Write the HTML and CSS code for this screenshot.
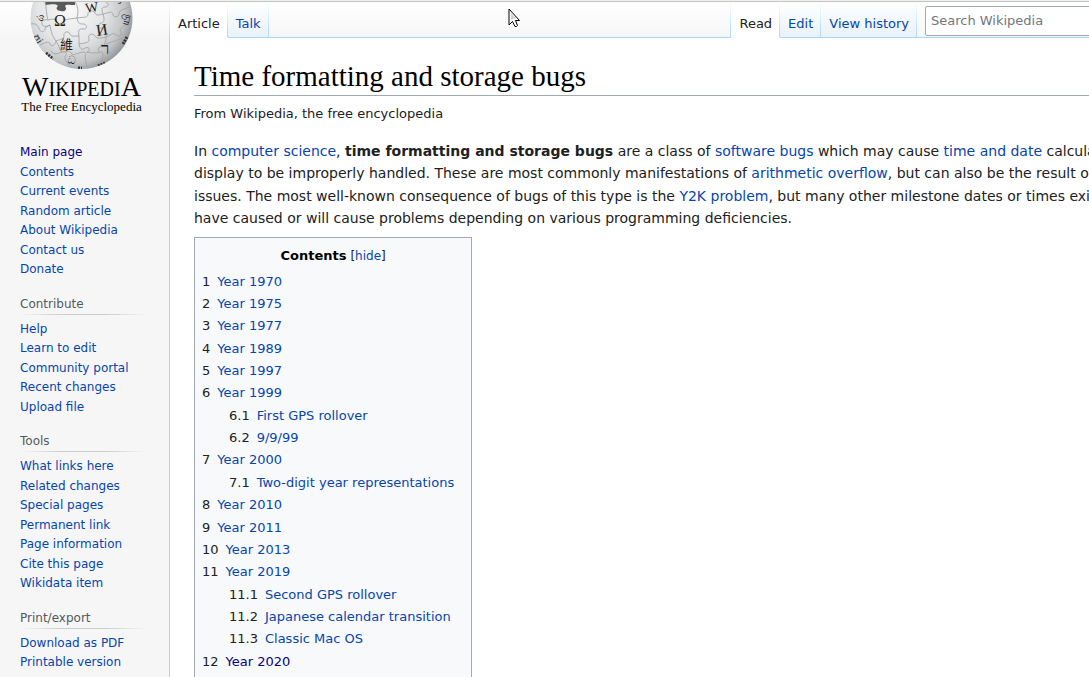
FILE: index.html
```html
<!DOCTYPE html>
<html lang="en">
<head>
<meta charset="utf-8">
<title>Time formatting and storage bugs - Wikipedia</title>
<link rel="stylesheet" href="styles.css">
</head>
<body>
<div class="page">
  <aside class="sidebar">
    <a class="logo" href="#" aria-label="Wikipedia main page">
      <svg class="globe" viewBox="0 0 104 68" width="104" height="68" aria-hidden="true">
        <defs>
          <radialGradient id="ball" cx="0.4" cy="0.42" r="0.66">
            <stop offset="0" stop-color="#f8f8f8"/>
            <stop offset="0.5" stop-color="#e4e5e6"/>
            <stop offset="0.8" stop-color="#c2c3c5"/>
            <stop offset="1" stop-color="#85878a"/>
          </radialGradient>
          <clipPath id="edge"><circle cx="51.500" cy="16" r="51"/></clipPath>
        </defs>
        <circle cx="51.500" cy="16" r="51" fill="url(#ball)"/>
        <g clip-path="url(#edge)">
          <path d="M15 0H45V3C40 3 36 2 35 4C38 8 34 10 31 9C27 9 25 6 28 4C25 1 20 3 15 3Z" fill="#58595b"/>
          <g fill="none" stroke="#a3a5a7" stroke-width="0.9">
            <path d="M15 0C17 7 16 13 18 18C13 17 11 19 12 22C13 26 17 24 20 23C21 29 22 34 26 39C31 37 34 37 34 34C33 30 38 28 40 32C41 35 44 34 49 34C48 29 49 26 53 27C57 28 58 23 54 22C50 22 48 22 47 16"/>
            <path d="M45 0C49 6 48 11 47 16C53 15 57 16 58 13C57 9 63 7 65 11C66 14 69 13 73 12C71 7 72 5 75 5C79 5 79 1 76 0"/>
            <path d="M18 18C25 16 27 18 27 21C28 24 34 24 34 20C34 17 40 17 47 16"/>
            <path d="M73 12C75 18 74 21 71 21C67 22 68 27 72 26C75 26 76 31 76 35C69 37 66 36 65 34C62 30 57 33 59 37C60 41 54 41 49 42L49 34"/>
            <path d="M73 12C81 10 82 9 83 13C85 17 90 14 89 11C89 8 95 7 102 4"/>
            <path d="M76 35C83 32 83 30 86 33C90 36 93 32 90 29C90 26 95 23 100 20"/>
            <path d="M49 42C50 48 53 48 55 46C60 44 61 49 57 50C54 52 55 58 58 67"/>
            <path d="M26 39C30 45 29 48 32 50C36 49 38 52 35 54C34 57 38 62 41 66"/>
            <path d="M76 35C76 41 74 45 70 45C67 46 68 51 72 50C74 52 73 57 69 65"/>
            <path d="M1 22C6 21 9 24 9 27C12 32 16 29 15 26L20 23M10 43C17 40 19 39 20 42C22 46 26 42 26 39M32 50C25 53 23 52 21 49"/>
            <path d="M32 50C39 49 40 49 41 51C44 55 47 50 55 50M57 50C64 52 67 50 70 51M76 42C84 39 88 38 92 36"/>
          </g>
          <g class="globe-glyphs">
            <text x="24" y="24" font-size="16">Ω</text>
            <text x="56" y="11" font-size="14" transform="rotate(-9 56 11)">W</text>
            <text x="67" y="34" font-size="16" transform="rotate(-9 67 34)">И</text>
            <text x="30" y="47" font-size="13" class="cjk">維</text>
            <text x="71" y="52" font-size="17">ר</text>
            <text x="5" y="18" font-size="10" transform="rotate(-75 10 14)">ώ</text>
            <text x="5" y="39" font-size="11" transform="rotate(60 8 35)">ʊj</text>
            <text x="91" y="21" font-size="11" transform="rotate(-75 96 18)">யி</text>
            <text x="88" y="2" font-size="10">J</text>
            <text x="37" y="62" font-size="11" transform="rotate(10 40 59)">ධ</text>
          </g>
          <path d="M16 51l7 6M93 42l4-7M68 64l7-3M48 66h4" stroke="#333" stroke-width="3" fill="none" stroke-dasharray="2 1"/>
        </g>
      </svg>
      <span class="wordmark"><span class="cap">W</span>IKIPEDI<span class="cap">A</span></span>
      <span class="tagline">The Free Encyclopedia</span>
    </a>
    <nav class="portal" aria-label="Navigation">
      <ul>
        <li><a class="visited" href="#">Main page</a></li>
        <li><a href="#">Contents</a></li>
        <li><a href="#">Current events</a></li>
        <li><a href="#">Random article</a></li>
        <li><a href="#">About Wikipedia</a></li>
        <li><a href="#">Contact us</a></li>
        <li><a href="#">Donate</a></li>
      </ul>
    </nav>
    <nav class="portal" aria-labelledby="p-contribute">
      <h3 id="p-contribute">Contribute</h3>
      <ul>
        <li><a href="#">Help</a></li>
        <li><a href="#">Learn to edit</a></li>
        <li><a href="#">Community portal</a></li>
        <li><a href="#">Recent changes</a></li>
        <li><a href="#">Upload file</a></li>
      </ul>
    </nav>
    <nav class="portal" aria-labelledby="p-tools">
      <h3 id="p-tools">Tools</h3>
      <ul>
        <li><a href="#">What links here</a></li>
        <li><a href="#">Related changes</a></li>
        <li><a href="#">Special pages</a></li>
        <li><a href="#">Permanent link</a></li>
        <li><a href="#">Page information</a></li>
        <li><a href="#">Cite this page</a></li>
        <li><a href="#">Wikidata item</a></li>
      </ul>
    </nav>
    <nav class="portal" aria-labelledby="p-print">
      <h3 id="p-print">Print/export</h3>
      <ul>
        <li><a href="#">Download as PDF</a></li>
        <li><a href="#">Printable version</a></li>
      </ul>
    </nav>
  </aside>
  <div class="column">
    <header class="head">
      <nav class="tabs" aria-label="Namespaces">
        <a class="tab selected" href="#">Article</a>
        <a class="tab" href="#">Talk</a>
      </nav>
      <nav class="tabs views" aria-label="Views">
        <a class="tab selected" href="#">Read</a>
        <a class="tab" href="#">Edit</a>
        <a class="tab" href="#">View history</a>
      </nav>
      <form class="search" role="search">
        <input type="search" placeholder="Search Wikipedia" aria-label="Search Wikipedia">
      </form>
    </header>
    <main class="content">
      <h1>Time formatting and storage bugs</h1>
      <p class="subtitle">From Wikipedia, the free encyclopedia</p>
      <p class="intro">In <a href="#">computer science</a>, <b>time formatting and storage bugs</b> are a class of <a href="#">software bugs</a> which may cause <a href="#">time and date</a> calculation or display to be improperly handled. These are most commonly manifestations of <a href="#">arithmetic overflow</a>, but can also be the result of other issues. The most well-known consequence of bugs of this type is the <a href="#">Y2K problem</a>, but many other milestone dates or times exist that have caused or will cause problems depending on various programming deficiencies.</p>
      <nav class="toc" aria-labelledby="toc-title">
        <div class="toc-head"><h2 id="toc-title">Contents</h2> <span class="toggle">[<button type="button">hide</button>]</span></div>
        <ul>
          <li><span class="num">1</span><a href="#">Year 1970</a></li>
          <li><span class="num">2</span><a href="#">Year 1975</a></li>
          <li><span class="num">3</span><a href="#">Year 1977</a></li>
          <li><span class="num">4</span><a href="#">Year 1989</a></li>
          <li><span class="num">5</span><a href="#">Year 1997</a></li>
          <li><span class="num">6</span><a href="#">Year 1999</a>
            <ul>
              <li><span class="num">6.1</span><a href="#">First GPS rollover</a></li>
              <li><span class="num">6.2</span><a href="#">9/9/99</a></li>
            </ul>
          </li>
          <li><span class="num">7</span><a href="#">Year 2000</a>
            <ul>
              <li><span class="num">7.1</span><a href="#">Two-digit year representations</a></li>
            </ul>
          </li>
          <li><span class="num">8</span><a href="#">Year 2010</a></li>
          <li><span class="num">9</span><a href="#">Year 2011</a></li>
          <li><span class="num">10</span><a href="#">Year 2013</a></li>
          <li><span class="num">11</span><a href="#">Year 2019</a>
            <ul>
              <li><span class="num">11.1</span><a href="#">Second GPS rollover</a></li>
              <li><span class="num">11.2</span><a href="#">Japanese calendar transition</a></li>
              <li><span class="num">11.3</span><a href="#">Classic Mac OS</a></li>
            </ul>
          </li>
          <li><span class="num">12</span><a class="visited" href="#">Year 2020</a></li>
        </ul>
      </nav>
    </main>
  </div>
</div>
<svg class="pointer" viewBox="0 0 12 20" width="12" height="20" aria-hidden="true">
  <path d="M1 1V17L4.500 13.500L7 18.500Q8.500 19 9.500 17.500L7.500 12.500H11.500Z" fill="#fff" stroke="#000" stroke-width="1"/>
  <path d="M3 5V12L8 10Z" fill="#d4d4d4"/>
</svg>
</body>
</html>
```

FILE: styles.css
```css
* {
  box-sizing: border-box;
}

body {
  margin: 0;
  height: 100vh;
  overflow: hidden;
  border-top: 1px solid #f0f0ee;
  background: #f6f6f6;
  color: #202122;
  font-family: "DejaVu Sans", sans-serif;
  font-size: 14px;
  line-height: 1.6;
}

a {
  color: #0645ad;
  text-decoration: none;
}

a.visited {
  color: #0b0080;
}

ul {
  list-style: none;
  margin: 0;
  padding: 0;
}

.page {
  display: flex;
  min-width: 1180px;
  min-height: 100vh;
  border-top: 1px solid #c4c4c0;
}

.sidebar {
  flex: 0 0 169px;
  background: linear-gradient(#fff, #f6f6f6 36px);
}

.logo {
  display: flex;
  flex-direction: column;
  align-items: center;
  width: 163px;
  height: 126px;
  color: #000;
  font-family: "Liberation Serif", serif;
  white-space: nowrap;
}

.globe-glyphs {
  fill: #1c1c1c;
  font-family: "Liberation Serif", "DejaVu Sans", serif;
}

.cjk {
  font-family: "Noto Sans CJK TC", sans-serif;
}

.wordmark {
  margin-top: 5px;
  font-size: 20px;
  line-height: 24px;
}

.cap {
  font-size: 28px;
}

.tagline {
  font-size: 13px;
  line-height: 12px;
}

.portal {
  margin: 15px 22px 0 20px;
  font-size: 12px;
  line-height: 1.625;
}

.portal h3 {
  margin: 0 0 5px;
  padding-bottom: 1px;
  background: linear-gradient(to right, #f6f6f6, #c8ccd1 33%, #c8ccd1 66%, #f6f6f6) bottom / 100% 1px no-repeat;
  color: #54595d;
  font-size: 12px;
  font-weight: normal;
  line-height: 19px;
}

.column {
  flex: 1;
  padding-left: 1px;
  background: linear-gradient(#fff, #a7d7f9 36px) left / 1px 100% no-repeat #fff;
}

.head {
  display: flex;
  height: 36px;
  border-bottom: 1px solid #a7d7f9;
  background: linear-gradient(#fff, #f6f6f6);
}

.tabs {
  display: flex;
  height: 36px;
}

.views {
  margin-left: auto;
  padding-left: 1px;
  background: linear-gradient(#fff, #a7d7f9) left / 1px 100% no-repeat;
}

.tab {
  padding: 11px 8px 0;
  border-bottom: 1px solid #a7d7f9;
  background:
    linear-gradient(#fff, #a7d7f9) right / 1px 100% no-repeat,
    linear-gradient(#fff, #e8f2f8);
  font-size: 13px;
  line-height: 22px;
}

.tab.selected {
  border-bottom-color: #fff;
  background: linear-gradient(#fff, #a7d7f9) right / 1px 100% no-repeat #fff;
  color: #202122;
}

.search {
  flex: 0 0 263px;
  padding: 4px 8px 0;
}

.search input {
  display: block;
  width: 100%;
  height: 30px;
  padding: 0 5px 2px;
  border: 1px solid #a2a9b1;
  border-radius: 2px;
  background: #fff;
  color: #202122;
  font: 13px "DejaVu Sans", sans-serif;
}

.search input::placeholder {
  color: #72777d;
}

.content {
  padding: 20px 24px 0;
}

h1 {
  margin: 0;
  border-bottom: 1px solid #a2a9b1;
  color: #000;
  font-family: "Linux Libertine", "Liberation Serif", serif;
  font-size: 29px;
  font-weight: normal;
  line-height: 37px;
}

.subtitle {
  margin: 7px 0 0;
  font-size: 13px;
  line-height: 22px;
}

.intro {
  margin: 15px 0 7px;
}

.toc {
  width: fit-content;
  padding: 7px 17px 7px 7px;
  border: 1px solid #a2a9b1;
  background: #f8f9fa;
}

.toc-head {
  display: flex;
  justify-content: center;
  gap: 4px;
  margin: 0 -10px 4px 0;
}

.toc h2 {
  margin: 0;
  color: #000;
  font-size: 13px;
  line-height: 22px;
}

.toggle {
  font-size: 12px;
  line-height: 22px;
}

.toggle button {
  padding: 0;
  border: 0;
  background: none;
  color: #0645ad;
  font: inherit;
}

.toc li {
  font-size: 13px;
  line-height: 1.72;
}

.toc ul ul {
  margin-left: 27px;
}

.num {
  padding-right: 7px;
}

.pointer {
  position: absolute;
  top: 8px;
  left: 508px;
}
```
